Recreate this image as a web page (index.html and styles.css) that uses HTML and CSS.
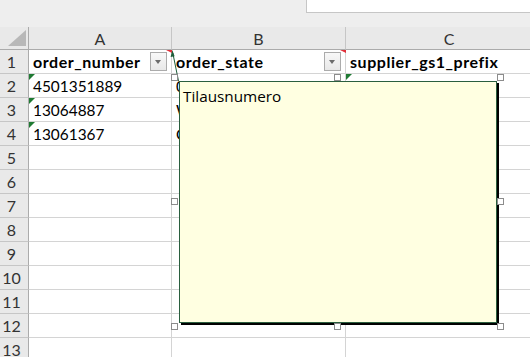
FILE: index.html
```html
<!DOCTYPE html>
<html>
<head>
<meta charset="utf-8">
<link rel="stylesheet" href="styles.css">
</head>
<body>
<div class="app">
  <div class="topbar"><div class="namebox"></div></div>
  <div class="sheet">
    <div class="corner"><div class="corner-tri"></div></div>
    <div class="colhead">A</div>
    <div class="colhead">B</div>
    <div class="colhead">C</div>

    <div class="rowhead">1</div>
    <div class="cell hdr"><span>order_number</span><span class="filter"></span><span class="note-ind"></span></div>
    <div class="cell hdr"><span>order_state</span><span class="filter"></span><span class="note-ind"></span></div>
    <div class="cell hdr"><span>supplier_gs1_prefix</span></div>

    <div class="rowhead">2</div>
    <div class="cell"><span class="err"></span>4501351889</div>
    <div class="cell">0044817775</div>
    <div class="cell"><span class="err"></span>6430001234</div>

    <div class="rowhead">3</div>
    <div class="cell"><span class="err"></span>13064887</div>
    <div class="cell">WAITING</div>
    <div class="cell"></div>

    <div class="rowhead">4</div>
    <div class="cell"><span class="err"></span>13061367</div>
    <div class="cell">OPEN</div>
    <div class="cell"></div>

    <div class="rowhead">5</div><div class="cell"></div><div class="cell"></div><div class="cell"></div>
    <div class="rowhead">6</div><div class="cell"></div><div class="cell"></div><div class="cell"></div>
    <div class="rowhead">7</div><div class="cell"></div><div class="cell"></div><div class="cell"></div>
    <div class="rowhead">8</div><div class="cell"></div><div class="cell"></div><div class="cell"></div>
    <div class="rowhead">9</div><div class="cell"></div><div class="cell"></div><div class="cell"></div>
    <div class="rowhead">10</div><div class="cell"></div><div class="cell"></div><div class="cell"></div>
    <div class="rowhead">11</div><div class="cell"></div><div class="cell"></div><div class="cell"></div>
    <div class="rowhead">12</div><div class="cell"></div><div class="cell"></div><div class="cell"></div>
    <div class="rowhead">13</div><div class="cell"></div><div class="cell"></div><div class="cell"></div>
  </div>

  <svg class="arrow" width="530" height="357" viewBox="0 0 530 357">
    <line x1="172.8" y1="53" x2="178.5" y2="81" stroke="#1f5e3b" stroke-width="1"/>
    <polygon points="172.3,50 170.6,57 174.6,56.2" fill="#1f5e3b"/>
  </svg>

  <div class="frame">
    <div class="comment">Tilausnumero</div>
    <span class="handle h-tl"></span>
    <span class="handle h-tm"></span>
    <span class="handle h-tr"></span>
    <span class="handle h-ml"></span>
    <span class="handle h-mr"></span>
    <span class="handle h-bl"></span>
    <span class="handle h-bm"></span>
    <span class="handle h-br"></span>
  </div>
</div>
</body>
</html>
```

FILE: styles.css
```css
html, body {
  margin: 0;
  padding: 0;
  background: #ffffff;
}
.app {
  position: relative;
  width: 530px;
  height: 357px;
  overflow: hidden;
  font-family: Lato, "Open Sans", sans-serif;
}
.topbar {
  height: 27px;
  background: #eeeeee;
  display: flex;
  justify-content: flex-end;
  align-items: flex-start;
}
.namebox {
  width: 224px;
  height: 13px;
  background: #ffffff;
  border-left: 1px solid #c6c6c6;
  border-bottom: 1px solid #c6c6c6;
  box-sizing: border-box;
}
.sheet {
  display: grid;
  grid-template-columns: 29px 143px 174px 207px;
  grid-template-rows: 23px;
  grid-auto-rows: 24px;
  width: 553px;
}
.corner {
  background: #e9e9e9;
  border-right: 1px solid #ababab;
  border-bottom: 1px solid #ababab;
  position: relative;
}
.corner-tri {
  position: absolute;
  left: 8px;
  top: 3px;
  width: 18px;
  height: 16px;
  background: #b8b8b8;
  clip-path: polygon(100% 0, 100% 100%, 0 100%);
}
.colhead {
  background: #e9e9e9;
  border-right: 1px solid #c6c6c6;
  border-bottom: 1px solid #ababab;
  display: flex;
  align-items: center;
  justify-content: center;
  font-size: 16px;
  color: #333333;
}
.rowhead {
  background: #e9e9e9;
  border-right: 1px solid #ababab;
  border-bottom: 1px solid #c6c6c6;
  display: flex;
  align-items: center;
  justify-content: center;
  padding-right: 5px;
  font-size: 16px;
  color: #333333;
}
.cell {
  position: relative;
  border-right: 1px solid #d4d4d4;
  border-bottom: 1px solid #d4d4d4;
  display: flex;
  align-items: center;
  padding: 0 3px 0 4px;
  font-size: 15.4px;
  color: #000000;
  white-space: nowrap;
  overflow: hidden;
}
.cell.hdr {
  font-weight: bold;
  font-size: 16px;
  letter-spacing: 0.55px;
  justify-content: space-between;
  overflow: visible;
}
.filter {
  width: 15px;
  height: 17px;
  margin-right: 1px;
  border: 1px solid #ababab;
  background: linear-gradient(#f8f8f8, #e8e8e8);
  position: relative;
  flex: none;
}
.filter::after {
  content: "";
  position: absolute;
  left: 4px;
  top: 7px;
  width: 0;
  height: 0;
  border-left: 3.5px solid transparent;
  border-right: 3.5px solid transparent;
  border-top: 4px solid #6b6b6b;
}
.note-ind {
  position: absolute;
  right: -1px;
  top: 0;
  width: 6px;
  height: 3px;
  background: #e0303a;
  clip-path: polygon(0 0, 100% 0, 100% 100%);
}
.err {
  position: absolute;
  left: 0;
  top: 0;
  width: 6px;
  height: 6px;
  background: #1f7a33;
  clip-path: polygon(0 0, 100% 0, 0 100%);
}
.arrow {
  position: absolute;
  left: 0;
  top: 0;
  pointer-events: none;
}
.frame {
  position: absolute;
  left: 171px;
  top: 74px;
  width: 333px;
  height: 256px;
}
.comment {
  position: absolute;
  left: 8px;
  top: 7px;
  right: 7px;
  bottom: 7px;
  background: #ffffe1;
  border: 1px solid #2a5e3e;
  box-shadow: 2px 2px 0 #000000;
  padding: 4px 3px;
  font-family: "Open Sans", sans-serif;
  font-size: 15.3px;
  line-height: 20px;
  color: #000000;
}
.handle {
  position: absolute;
  width: 7px;
  height: 7px;
  box-sizing: border-box;
  border: 1px solid #8c8c8c;
  background: #ffffff;
}
.h-tl { left: 0; top: 0; }
.h-tm { left: 163px; top: 0; }
.h-tr { right: 0; top: 0; }
.h-ml { left: 0; top: 124px; }
.h-mr { right: 0; top: 124px; }
.h-bl { left: 0; bottom: 0; }
.h-bm { left: 163px; bottom: 0; }
.h-br { right: 0; bottom: 0; }
```
